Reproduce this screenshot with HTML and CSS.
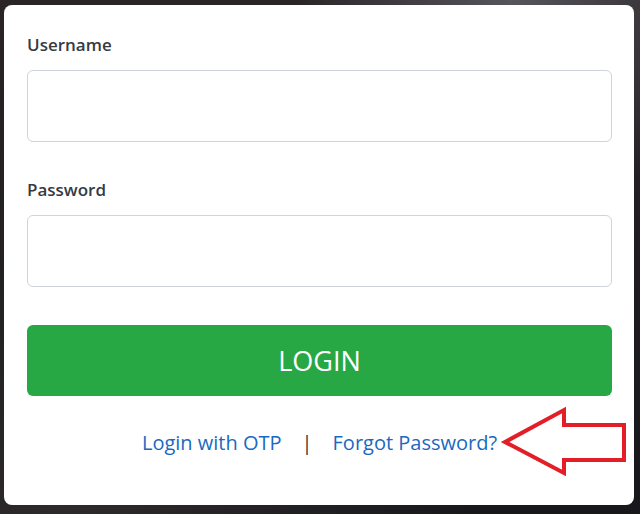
FILE: index.html
```html
<!DOCTYPE html>
<html lang="en">
<head>
<meta charset="utf-8">
<title>Login</title>
<link rel="stylesheet" href="styles.css">
</head>
<body>
<main class="card">
  <form class="login-form">
    <div class="field">
      <label class="field-label" for="username">Username</label>
      <input class="field-input" id="username" type="text">
    </div>
    <div class="field">
      <label class="field-label" for="password">Password</label>
      <input class="field-input" id="password" type="password">
    </div>
    <button class="login-btn" type="button">LOGIN</button>
    <div class="links">
      <a class="link" href="#">Login with OTP</a>
      <span class="sep">|</span>
      <a class="link" href="#">Forgot Password?</a>
    </div>
  </form>
</main>
<svg class="annotation" width="140" height="85" viewBox="0 0 140 85" aria-hidden="true">
  <polygon points="10,42 69,10 69,25 129,25 129,60 69,60 69,73" fill="none" stroke="#e31e26" stroke-width="4" stroke-linejoin="miter"/>
</svg>
</body>
</html>
```
FILE: styles.css
```css
html, body {
  margin: 0;
  padding: 0;
}
body {
  width: 640px;
  height: 514px;
  overflow: hidden;
  position: relative;
  font-family: "Open Sans", "Noto Sans", sans-serif;
  background:
    radial-gradient(ellipse at 80% 0%, #55555c 0%, rgba(60,60,66,0) 30%),
    radial-gradient(ellipse at 10% 100%, #2e2a2c 0%, rgba(30,28,30,0) 50%),
    linear-gradient(180deg, #2a2426 0%, #1d1b1f 60%, #18181c 100%);
}
.card {
  box-sizing: border-box;
  margin: 5px 6px 0 4px;
  height: 500px;
  background: #ffffff;
  border-radius: 8px;
  padding: 28px 22px 0 23px;
}
.login-form {
  display: flex;
  flex-direction: column;
}
.field {
  display: flex;
  flex-direction: column;
  margin-bottom: 36px;
}
.field + .field {
  margin-bottom: 38px;
}
.field-label {
  font-size: 17px;
  font-weight: 600;
  line-height: 24px;
  color: #363a43;
  margin-bottom: 13px;
}
.field-input {
  box-sizing: border-box;
  height: 72px;
  border: 1px solid #ced4da;
  border-radius: 6px;
  background: #ffffff;
  outline: none;
}
.login-btn {
  height: 71px;
  border: none;
  border-radius: 6px;
  background: #28a745;
  color: #ffffff;
  font-family: "Open Sans", "Noto Sans", sans-serif;
  font-size: 27px;
  font-weight: 400;
  padding: 0;
}
.links {
  margin-top: 33px;
  display: flex;
  justify-content: center;
  align-items: baseline;
  font-size: 20px;
  line-height: 28px;
}
.link {
  color: #1a69c1;
  text-decoration: none;
}
.sep {
  color: #333333;
  margin: 0 20px;
}
.annotation {
  position: absolute;
  left: 495px;
  top: 400px;
}
```
